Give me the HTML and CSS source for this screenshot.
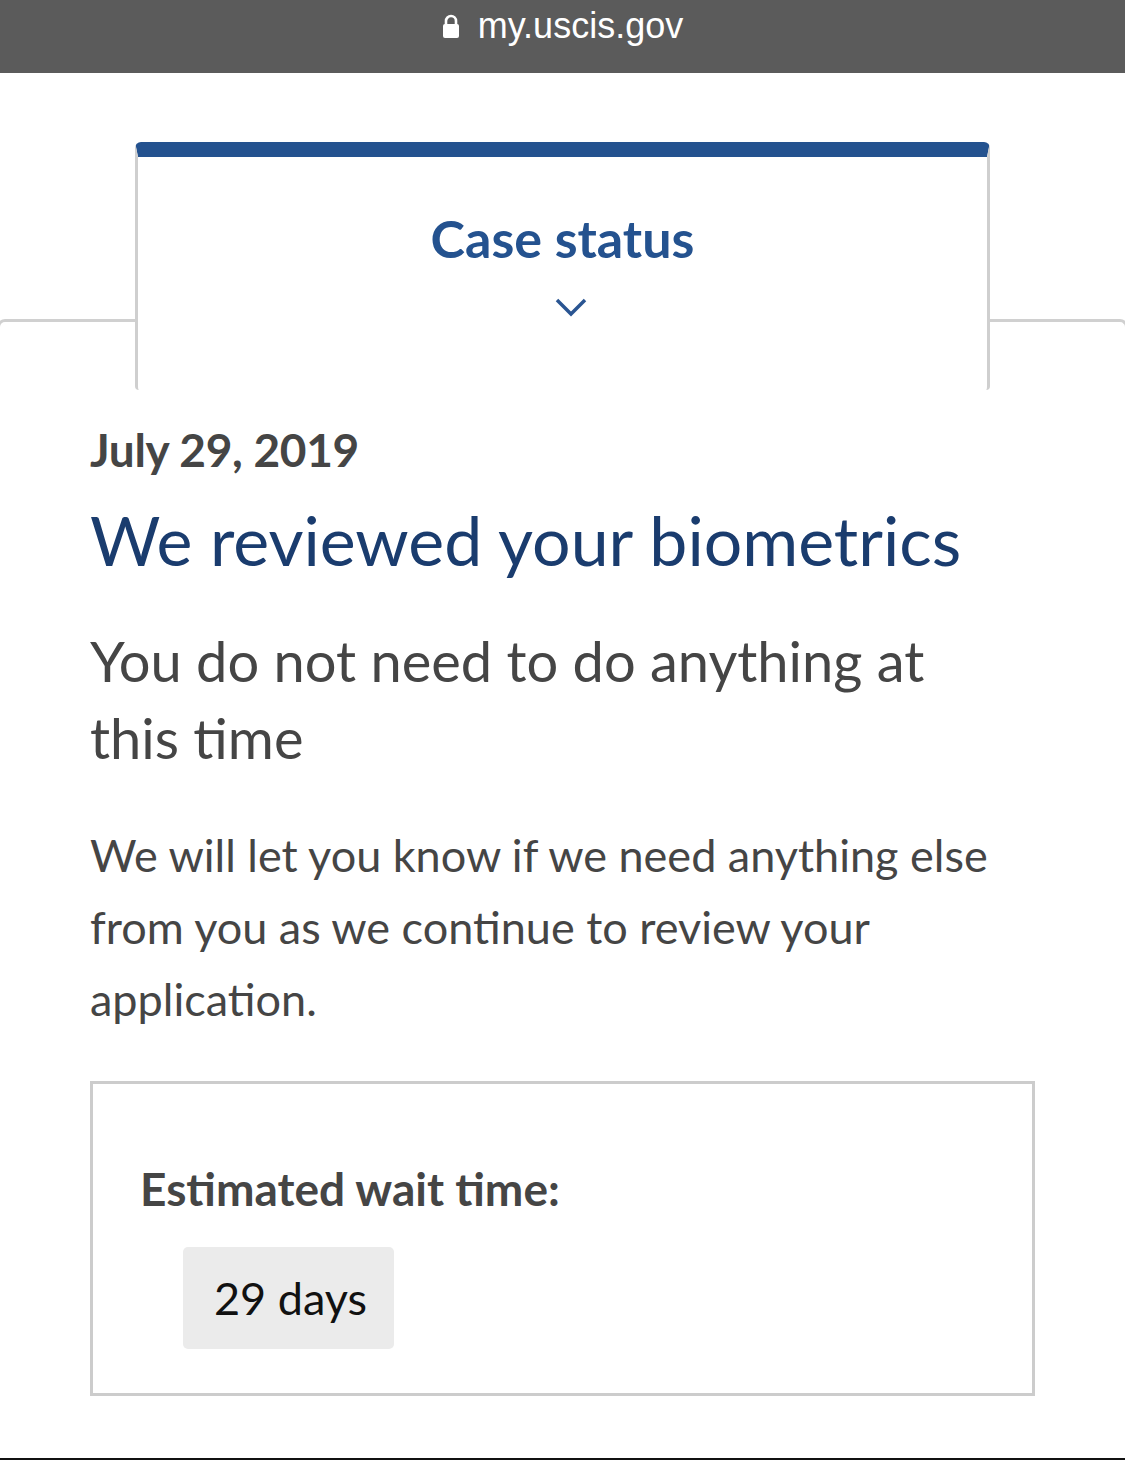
FILE: index.html
```html
<!DOCTYPE html>
<html lang="en">
<head>
  <meta charset="UTF-8" />
  <meta name="viewport" content="width=device-width, initial-scale=1.0"/>
  <title>Case status - my.uscis.gov</title>
  <link rel="stylesheet" href="styles.css">
</head>
<body>

  <!-- Barra del navegador -->
  <div class="barra-url">
    <svg class="candado" width="18" height="24" viewBox="0 0 18 24">
      <path d="M4 11 V7 A5 5 0 0 1 14 7 V11" fill="none" stroke="#fff" stroke-width="2.6"/>
      <rect x="1" y="10" width="16" height="14" rx="2" fill="#fff"/>
    </svg>
    <span>my.uscis.gov</span>
  </div>

  <!-- Pestaña -->
  <div class="pestana">
    <h2>Case status</h2>
    <svg class="flecha" width="32" height="20" viewBox="0 0 32 20">
      <path d="M2 3 L16 17 L30 3" fill="none" stroke="#2a5592" stroke-width="3.5"/>
    </svg>
  </div>

  <!-- Tarjeta -->
  <div class="tarjeta">
    <p class="fecha">July 29, 2019</p>
    <h1>We reviewed your biometrics</h1>
    <p class="subtitulo">You do not need to do anything at this time</p>
    <p class="texto">We will let you know if we need anything else from you as we continue to review your application.</p>

    <div class="espera">
      <h3>Estimated wait time:</h3>
      <span class="dias">29 days</span>
    </div>
  </div>

  <div class="linea-final"></div>

</body>
</html>
```

FILE: styles.css
```css
/* Estilos generales */
body {
  margin: 0;
  font-family: Lato, "Open Sans", sans-serif;
  background-color: #fff;
  color: #454545;
  overflow-x: hidden;
}

/* Barra del navegador */
.barra-url {
  height: 73px;
  background-color: #5b5b5b;
  display: flex;
  justify-content: center;
  align-items: center;
  gap: 18px;
  padding-bottom: 22px;
  box-sizing: border-box;
}

.barra-url span {
  font-family: "Liberation Sans", Arial, sans-serif;
  font-size: 36px;
  color: #fff;
}

.candado {
  display: block;
}

/* Pestaña */
.pestana {
  position: relative;
  z-index: 1;
  margin: 69px 135px -71px;
  height: 248px;
  box-sizing: border-box;
  background-color: #fff;
  border: 3px solid #cfcfcf;
  border-top: 15px solid #24528f;
  border-bottom: none;
  border-radius: 6px 6px 4px 4px;
  display: flex;
  flex-direction: column;
  align-items: center;
}

.pestana h2 {
  margin: 48px 0 0;
  font-size: 52px;
  font-weight: 700;
  color: #24528f;
  line-height: 66px;
}

.flecha {
  display: block;
  margin: 26px 0 0 16px;
}

/* Tarjeta */
.tarjeta {
  margin: 0 -3px;
  border: 3px solid #d0d0d0;
  border-bottom: none;
  border-radius: 8px 8px 0 0;
  padding: 98px 90px 62px 90px;
}

.fecha {
  margin: 0;
  font-size: 46px;
  font-weight: 700;
  letter-spacing: -0.3px;
  line-height: 60px;
}

h1 {
  margin: 20px 0 0;
  font-size: 68px;
  font-weight: 400;
  color: #1a3c6e;
  line-height: 80px;
}

.subtitulo {
  margin: 42px 0 0;
  font-size: 56px;
  line-height: 77px;
  padding-right: 80px;
}

.texto {
  margin: 43px 0 0;
  font-size: 45px;
  line-height: 72px;
}

/* Tiempo de espera */
.espera {
  margin-top: 46px;
  border: 3px solid #cccccc;
  height: 315px;
  box-sizing: border-box;
  padding: 75px 40px 0 47px;
}

.espera h3 {
  margin: 0;
  font-size: 46px;
  font-weight: 700;
  line-height: 60px;
}

.dias {
  display: inline-block;
  margin: 28px 0 0 43px;
  width: 211px;
  height: 102px;
  box-sizing: border-box;
  padding-left: 31px;
  background-color: #ebebeb;
  border-radius: 5px;
  font-size: 45px;
  line-height: 102px;
  color: #111;
}

.linea-final {
  height: 2px;
  background-color: #111;
}
```
